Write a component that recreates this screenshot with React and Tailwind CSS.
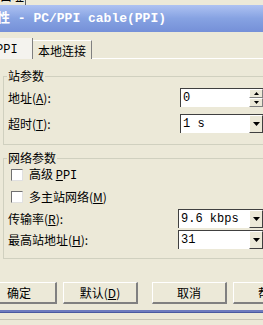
import React from "react";

const cjk = { fontFamily: '"Noto Sans CJK SC", "Liberation Sans", sans-serif' };
const mono = { fontFamily: '"Liberation Mono", "Noto Sans CJK SC", monospace' };

function Arrow() {
  return (
    <div className="w-[14px] self-stretch bg-[#ece9d8] border-l border-t border-l-white border-t-white border-r border-b border-r-[#404040] border-b-[#404040] flex items-center justify-center">
      <svg width="7" height="4" viewBox="0 0 7 4"><path d="M0 0H7L3.5 4Z" fill="#000" /></svg>
    </div>
  );
}

function Combo({ value }) {
  return (
    <div className="flex h-[19px] bg-white border-l border-t border-[#404040]">
      <div className="flex-1 flex items-center pl-[2px] text-[12px] text-black" style={mono}>{value}</div>
      <Arrow />
    </div>
  );
}

function Spin({ value }) {
  return (
    <div className="flex h-[19px] bg-white border-l border-t border-[#404040]">
      <div className="flex-1 flex items-center pl-[2px] text-[12px] text-black" style={mono}>{value}</div>
      <div className="w-[14px] flex flex-col bg-[#ece9d8]">
        <div className="flex-1 border-l border-t border-white border-r border-b border-r-[#808080] border-b-[#808080] flex items-center justify-center">
          <svg width="5" height="3" viewBox="0 0 5 3"><path d="M2.5 0L5 3H0Z" fill="#000" /></svg>
        </div>
        <div className="flex-1 border-l border-t border-white border-r border-b border-r-[#808080] border-b-[#808080] flex items-center justify-center">
          <svg width="5" height="3" viewBox="0 0 5 3"><path d="M0 0H5L2.5 3Z" fill="#000" /></svg>
        </div>
      </div>
    </div>
  );
}

function Btn({ children, className = "" }) {
  return (
    <div className={"w-[75px] h-[22px] shrink-0 bg-[#ece9d8] border-l border-t border-white border-r-2 border-b-2 border-r-[#808080] border-b-[#808080] flex items-center justify-center text-[12px] text-black " + className} style={cjk}>
      {children}
    </div>
  );
}

function Check({ children }) {
  return (
    <div className="flex items-center h-[13px] gap-[6px] pl-[7px]">
      <div className="w-[12px] h-[12px] bg-white border-l border-t border-[#707070] border-r border-b border-r-[#e0e0e0] border-b-[#e0e0e0]"></div>
      <span className="text-[12px] text-black leading-none" style={cjk}>{children}</span>
    </div>
  );
}

export default function App() {
  return (
    <div className="w-[263px] h-[325px] overflow-hidden bg-[#ece9d8] flex flex-col">
      {/* previous window strip */}
      <div className="h-[5px] overflow-hidden bg-[#ece9d8] flex">
        <div className="w-[26px] border-r border-[#606060] overflow-hidden">
          <div className="mt-[-11px] text-[12px] text-black leading-[14px]" style={cjk}>口址</div>
        </div>
      </div>
      {/* title bar */}
      <div className="h-[27px] bg-gradient-to-b from-[#aec2f2] via-[#86a2e2] to-[#7590d8] flex items-center overflow-hidden whitespace-nowrap">
        <span className="text-white text-[13px] font-bold ml-[-3px]" style={mono}>性 - PC/PPI cable(PPI)</span>
      </div>
      {/* body */}
      <div className="flex-1 flex flex-col">
        {/* tabs */}
        <div className="h-[27px] flex items-end">
          <div className="w-[33px] h-[21px] bg-[#f4f3ee] border-r border-[#808080] flex items-center pt-[3px] text-[12px] text-black" style={mono}>
            <span className="ml-[-4px]">PPI</span>
          </div>
          <div className="w-[59px] h-[19px] border-t border-white border-r border-r-[#808080] flex items-center justify-center pt-[2px] text-[12px] text-black" style={cjk}>本地连接</div>
          <div className="flex-1 border-b border-white"></div>
        </div>
        {/* tab page */}
        <div className="flex flex-col pt-[17px] pl-[3px]">
          {/* group 1 */}
          <div className="relative border-t border-l border-b border-[#d0d0bf] pt-[11px] pb-[11px]">
            <span className="absolute left-[3px] top-[-9px] bg-[#ece9d8] px-[1px] text-[12px] leading-[16px] text-black" style={cjk}>站参数</span>
            <div className="flex flex-col gap-[7px]">
              <div className="flex items-center">
                <span className="w-[176px] pl-[4px] text-[12px] text-black" style={cjk}>地址(<u>A</u>):</span>
                <div className="flex-1"><Spin value="0" /></div>
              </div>
              <div className="flex items-center">
                <span className="w-[176px] pl-[4px] text-[12px] text-black" style={cjk}>超时(<u>T</u>):</span>
                <div className="flex-1"><Combo value="1 s" /></div>
              </div>
            </div>
          </div>
          {/* group 2 */}
          <div className="relative mt-[13px] border-t border-l border-b border-[#d0d0bf] pt-[9px] pb-[9px]">
            <span className="absolute left-[3px] top-[-9px] bg-[#ece9d8] px-[1px] text-[12px] leading-[16px] text-black" style={cjk}>网络参数</span>
            <div className="flex flex-col">
              <Check>高级 <span style={mono}><u>P</u>PI</span></Check>
              <div className="h-[9px]"></div>
              <Check>多主站网络(<u>M</u>)</Check>
              <div className="h-[6px]"></div>
              <div className="flex items-center">
                <span className="w-[174px] pl-[4px] text-[12px] text-black" style={cjk}>传输率(<u>R</u>):</span>
                <div className="flex-1"><Combo value="9.6 kbps" /></div>
              </div>
              <div className="h-[2px]"></div>
              <div className="flex items-center">
                <span className="w-[174px] pl-[4px] text-[12px] text-black" style={cjk}>最高站地址(<u>H</u>):</span>
                <div className="flex-1"><Combo value="31" /></div>
              </div>
            </div>
          </div>
        </div>
        {/* buttons */}
        <div className="mt-[23px] flex">
          <Btn className="ml-[-18px]">确定</Btn>
          <Btn className="ml-[6px]">默认(<u>D</u>)</Btn>
          <Btn className="ml-[14px]">取消</Btn>
          <Btn className="ml-[6px]">帮助</Btn>
        </div>
      </div>
      {/* bottom border of dialog */}
      <div className="h-[3px] bg-[#6f7cbe] border-b border-[#4a5aa0]"></div>
      <div className="h-[12px] bg-[#ece9d8] flex flex-col">
        <div className="h-[6px]"></div>
        <div className="h-px bg-[#c8c5b5]"></div>
      </div>
    </div>
  );
}
